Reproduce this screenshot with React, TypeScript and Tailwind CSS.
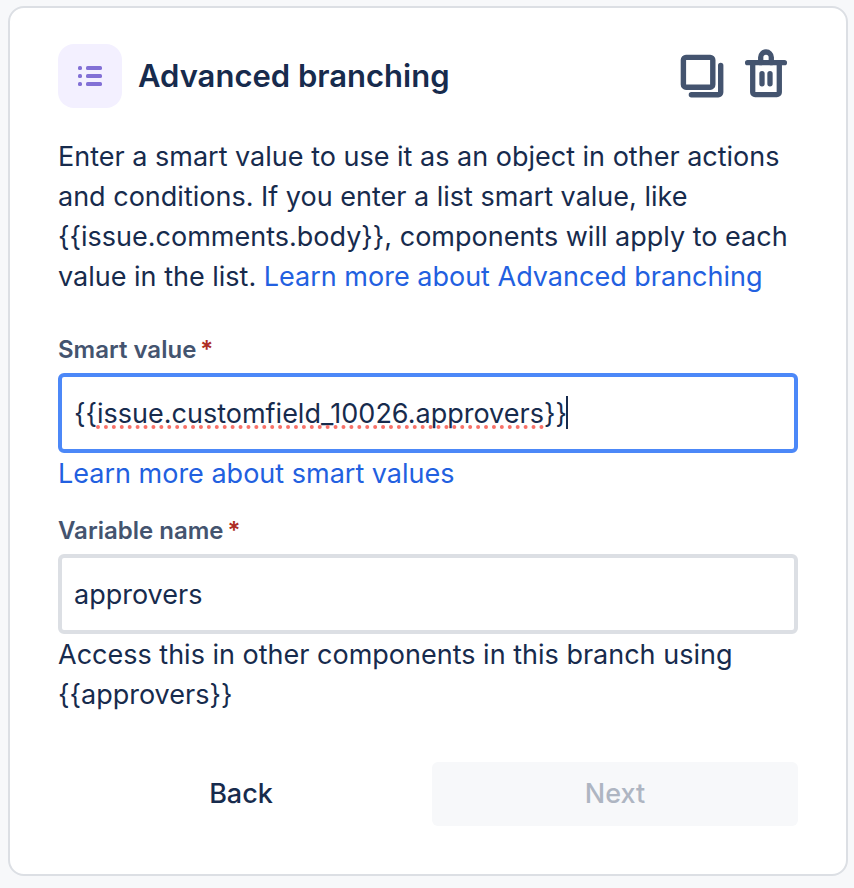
import type { InputHTMLAttributes } from "react";

function ListIcon() {
  return (
    <svg viewBox="0 0 24 20" className="h-5 w-6" fill="#8270d6" aria-hidden="true">
      {[0, 8, 16].map((y) => (
        <g key={y}>
          <rect x="0" y={y} width="4" height="4" rx="1.6" />
          <rect x="8" y={y} width="16" height="4" rx="1.6" />
        </g>
      ))}
    </svg>
  );
}

function CopyIcon() {
  return (
    <svg viewBox="0 0 48 56" className="h-14 w-12" fill="none" stroke="#44546f" strokeWidth="5.4" strokeLinecap="round" strokeLinejoin="round" aria-hidden="true">
      <rect x="5.4" y="9.4" width="29.4" height="29.8" rx="2.6" />
      <path d="M42.7 17.4v26.9a2.4 2.4 0 0 1-2.4 2.4H13.4" />
    </svg>
  );
}

function TrashIcon() {
  return (
    <svg viewBox="0 0 48 56" className="h-14 w-12" fill="none" stroke="#44546f" strokeWidth="5.3" strokeLinecap="round" strokeLinejoin="round" aria-hidden="true">
      <path d="M5.6 14.7h36.8" />
      <path d="M10.7 14.7v29.5a2.4 2.4 0 0 0 2.4 2.4h21.8a2.4 2.4 0 0 0 2.4-2.4V14.7" />
      <path d="M18.7 14.7V9.3a5.3 5.3 0 0 1 10.6 0v5.4" />
      <path d="M20 25.6v10.2M28 25.6v10.2" />
    </svg>
  );
}

function FieldLabel({ htmlFor, children }: { htmlFor: string; children: string }) {
  return (
    <label htmlFor={htmlFor} className="mb-[7px] flex gap-1 text-[24px] leading-8 font-semibold text-[#44546f]">
      {children}
      <span className="text-[#ae2e24]" aria-hidden="true">*</span>
    </label>
  );
}

function TextField({ active, ...props }: { active?: boolean } & InputHTMLAttributes<HTMLInputElement>) {
  return (
    <input
      {...props}
      type="text"
      required
      className={`block h-20 w-full rounded-[6px] border-4 bg-white px-3 outline-none ${active ? "border-[#4c88f8]" : "border-[#dcdfe4]"}`}
    />
  );
}

export default function App() {
  return (
    <main className="min-h-screen bg-[#f7f8fa] pt-[6px] pr-[6px] pb-3 pl-2 font-['Inter','Liberation_Sans',sans-serif] text-[27px] leading-10 text-[#172b4d]">
      <section className="rounded-[16px] border-2 border-[#dcdfe4] bg-white px-12 pt-9 pb-12">
        <header className="flex items-center">
          <div className="flex size-16 items-center justify-center rounded-[16px] bg-[#f3f0ff]">
            <ListIcon />
          </div>
          <h1 className="ml-4 text-[31px] font-semibold">Advanced branching</h1>
          <div className="ml-auto flex gap-4 pr-2">
            <button type="button" aria-label="Duplicate"><CopyIcon /></button>
            <button type="button" aria-label="Delete"><TrashIcon /></button>
          </div>
        </header>
        <p className="mt-[29px]">
          Enter a smart value to use it as an object in other actions and conditions. If you enter a list smart value, like {"{{issue.comments.body}}"}, components will apply to each value in the list.{" "}
          <a href="#branching" className="text-[#2260e0]">Learn more about Advanced branching</a>
        </p>
        <form onSubmit={(event) => event.preventDefault()}>
          <div className="mt-[37px]">
            <FieldLabel htmlFor="smart-value">Smart value</FieldLabel>
            <div className="relative">
              <TextField id="smart-value" active spellCheck={false} defaultValue="{{issue.customfield_10026.approvers}}" />
              <span className="pointer-events-none absolute top-[52px] left-[38px] w-[448px] border-b-4 border-dotted border-[#f87168]" aria-hidden="true" />
              <span className="pointer-events-none absolute top-[23px] left-[508px] h-[33px] w-[2px] bg-[#172b4d]" aria-hidden="true" />
            </div>
            <a href="#smart-values" className="block w-fit pt-px text-[#2260e0]">Learn more about smart values</a>
          </div>
          <div className="mt-[21px]">
            <FieldLabel htmlFor="variable-name">Variable name</FieldLabel>
            <TextField id="variable-name" spellCheck={false} defaultValue="approvers" aria-describedby="variable-hint" />
            <p id="variable-hint" className="pt-px">
              Access this in other components in this branch using {"{{approvers}}"}
            </p>
          </div>
          <div className="mt-[47px] grid grid-cols-2 gap-2">
            <button type="button" className="h-16 rounded-[6px] font-medium">Back</button>
            <button type="submit" disabled className="h-16 rounded-[6px] bg-[#f7f8fa] font-medium text-[#aeb5c2]">Next</button>
          </div>
        </form>
      </section>
    </main>
  );
}
